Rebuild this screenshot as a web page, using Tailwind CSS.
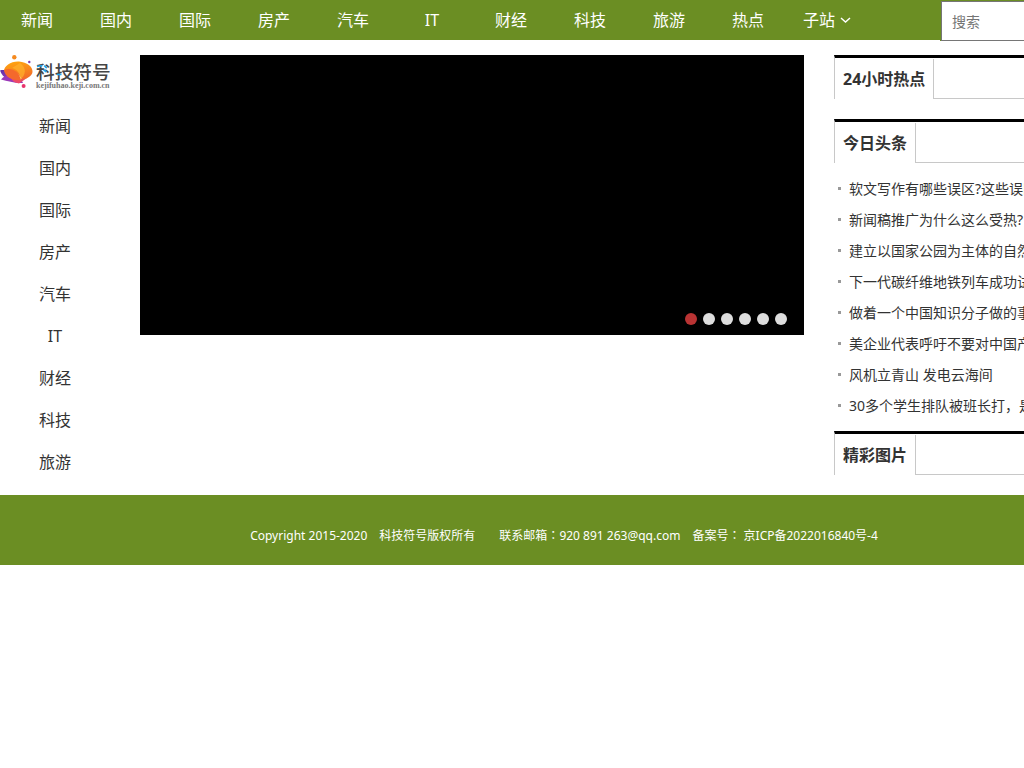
<!DOCTYPE html>
<html lang="zh-CN">
<head>
<meta charset="utf-8">
<meta name="viewport" content="width=device-width, initial-scale=1">
<title>科技符号</title>
<script src="https://cdn.jsdelivr.net/npm/@tailwindcss/browser@4"></script>
</head>
<body class="overflow-x-hidden bg-white font-['Noto_Sans','Noto_Sans_CJK_SC',sans-serif] text-[#333]">
<div class="min-w-[1128px]">
  <header class="flex h-10 items-start justify-between bg-[#6b8e23]">
    <nav class="flex gap-[5px] text-center text-base leading-10 text-white">
      <a href="#" class="w-[74px]">新闻</a>
      <a href="#" class="w-[74px]">国内</a>
      <a href="#" class="w-[74px]">国际</a>
      <a href="#" class="w-[74px]">房产</a>
      <a href="#" class="w-[74px]">汽车</a>
      <a href="#" class="w-[74px]">IT</a>
      <a href="#" class="w-[74px]">财经</a>
      <a href="#" class="w-[74px]">科技</a>
      <a href="#" class="w-[74px]">旅游</a>
      <a href="#" class="w-[74px]">热点</a>
      <a href="#" class="flex w-[74px] items-center justify-center gap-1">子站
        <svg class="size-3" viewBox="0 0 12 12" fill="none" stroke="currentColor" stroke-width="1.5" aria-hidden="true"><path d="M2 4 6.500 8 11 4"/></svg>
      </a>
    </nav>
    <form class="flex w-[188px] bg-[#6b8e23] pt-px pl-px">
      <input type="search" aria-label="搜索" placeholder="搜索" class="h-10 w-full border border-[#767676] bg-white px-2.5 text-sm text-[#333] outline-none placeholder:text-[#757575]">
    </form>
  </header>

  <main class="flex items-start pt-[15px] pb-3">
    <aside class="w-[110px] shrink-0">
      <a href="#" class="block" aria-label="科技符号">
        <svg class="h-[35px] w-[110px] overflow-visible" viewBox="0 0 110 35">
          <defs>
            <linearGradient id="orange" x1="0.300" y1="0" x2="0.600" y2="1"><stop offset="0" stop-color="#ffa50f"/><stop offset="1" stop-color="#f26a2a"/></linearGradient>
            <linearGradient id="purple" x1="0" y1="0" x2="1" y2="1"><stop offset="0" stop-color="#5b2fa8"/><stop offset="1" stop-color="#b847c4"/></linearGradient>
          </defs>
          <circle cx="14.300" cy="2.300" r="2.200" fill="#f58a1f"/>
          <circle cx="29.300" cy="7" r="1.200" fill="#7a3fb5"/>
          <circle cx="23.600" cy="31" r="2" fill="#e8336d"/>
          <path d="M0 15.500C3 14.500 6 15 9 17L20 26C12 28 3 24 0 15.500Z" fill="url(#purple)"/>
          <path d="M1 24.500C6 18.500 13 18.500 21 24L23 28C15 28.500 8 26 1 24.500Z" fill="#9a38b8"/>
          <path d="M11 23C16 24 22 24 27 23L19 28.500C15 28 12 26 11 23Z" fill="#ed4a68"/>
          <path d="M4 16C4 11 11 6 19 6.500C27 7 33 12 32.500 17C32 21 27 24 22 24.500C20 20 16 17 11 17C8 16.500 6 18 4 16Z" fill="url(#orange)"/>
          <path d="M4 15C11 12 19 16 21 25C14 26 5 23 4 15Z" fill="#f4692c"/>
          <path d="M20 8C27 13 26 20 20 25C21 19 17 14 12 13Z" fill="#ffb52e" opacity=".65"/>
          <text x="36" y="24" font-size="18.700" font-weight="500" fill="#454545" font-family="Noto Sans CJK SC, sans-serif">科技符号</text>
          <path d="M37 11.500 42.500 10.500M44.200 10.700 46.800 13M43.600 14.800 46.500 17M57 19.500H61.500" fill="none" stroke="#20a5ee" stroke-width="1.700"/>
          <text x="36" y="33" font-size="8" font-weight="700" fill="#777" font-family="Liberation Serif, serif">kejifuhao.keji.com.cn</text>
        </svg>
      </a>
      <nav class="mt-[15px] flex flex-col text-center text-base leading-[42px]">
        <a href="#">新闻</a>
        <a href="#">国内</a>
        <a href="#">国际</a>
        <a href="#">房产</a>
        <a href="#">汽车</a>
        <a href="#">IT</a>
        <a href="#">财经</a>
        <a href="#">科技</a>
        <a href="#">旅游</a>
      </nav>
    </aside>

    <section class="ml-[30px] flex h-[280px] flex-1 items-end justify-end gap-1.5 bg-black px-[17px] py-2.5" aria-label="幻灯片">
      <button type="button" aria-label="第1张" class="size-3 rounded-full bg-[#b93333]"></button>
      <button type="button" aria-label="第2张" class="size-3 rounded-full bg-[#ddd]"></button>
      <button type="button" aria-label="第3张" class="size-3 rounded-full bg-[#ddd]"></button>
      <button type="button" aria-label="第4张" class="size-3 rounded-full bg-[#ddd]"></button>
      <button type="button" aria-label="第5张" class="size-3 rounded-full bg-[#ddd]"></button>
      <button type="button" aria-label="第6张" class="size-3 rounded-full bg-[#ddd]"></button>
    </section>

    <aside class="ml-[30px] w-[294px] shrink-0">
      <div class="flex h-11 border-t-3 border-l border-t-black border-l-[#c8c8c8]">
        <h2 class="mt-px px-2 text-base leading-10 font-bold">24小时热点</h2>
        <div class="mt-px flex-1 border-b border-l border-[#c8c8c8]"></div>
      </div>
      <div class="mt-5 flex h-11 border-t-3 border-l border-t-black border-l-[#c8c8c8]">
        <h2 class="mt-px px-2 text-base leading-10 font-bold">今日头条</h2>
        <div class="mt-px flex-1 border-b border-l border-[#c8c8c8]"></div>
      </div>
      <ul class="mt-2.5 mb-2.5 pl-1 text-sm leading-[31px] whitespace-nowrap">
        <li class="flex items-center gap-2"><span class="size-[3px] bg-[#999]"></span><a href="#">软文写作有哪些误区?这些误区</a></li>
        <li class="flex items-center gap-2"><span class="size-[3px] bg-[#999]"></span><a href="#">新闻稿推广为什么这么受热?</a></li>
        <li class="flex items-center gap-2"><span class="size-[3px] bg-[#999]"></span><a href="#">建立以国家公园为主体的自然</a></li>
        <li class="flex items-center gap-2"><span class="size-[3px] bg-[#999]"></span><a href="#">下一代碳纤维地铁列车成功试</a></li>
        <li class="flex items-center gap-2"><span class="size-[3px] bg-[#999]"></span><a href="#">做着一个中国知识分子做的事</a></li>
        <li class="flex items-center gap-2"><span class="size-[3px] bg-[#999]"></span><a href="#">美企业代表呼吁不要对中国产</a></li>
        <li class="flex items-center gap-2"><span class="size-[3px] bg-[#999]"></span><a href="#">风机立青山 发电云海间</a></li>
        <li class="flex items-center gap-2"><span class="size-[3px] bg-[#999]"></span><a href="#">30多个学生排队被班长打，是</a></li>
      </ul>
      <div class="flex h-11 border-t-3 border-l border-t-black border-l-[#c8c8c8]">
        <h2 class="mt-px px-2 text-base leading-10 font-bold">精彩图片</h2>
        <div class="mt-px flex-1 border-b border-l border-[#c8c8c8]"></div>
      </div>
    </aside>
  </main>

  <footer class="bg-[#6b8e23] pt-[31px] pb-[19px] text-xs leading-5 text-white">
    <div class="flex justify-center gap-3">
      <span>Copyright 2015-2020</span>
      <span class="mr-3">科技符号版权所有</span>
      <span>联系邮箱<span lang="zh-TW" class="font-['Noto_Sans_CJK_TC',sans-serif] leading-none">：</span>920 891 263@qq.com</span>
      <span>备案号<span lang="zh-TW" class="font-['Noto_Sans_CJK_TC',sans-serif] leading-none">：</span> <a href="#">京ICP备2022016840号-4</a></span>
    </div>
  </footer>
</div>
</body>
</html>
